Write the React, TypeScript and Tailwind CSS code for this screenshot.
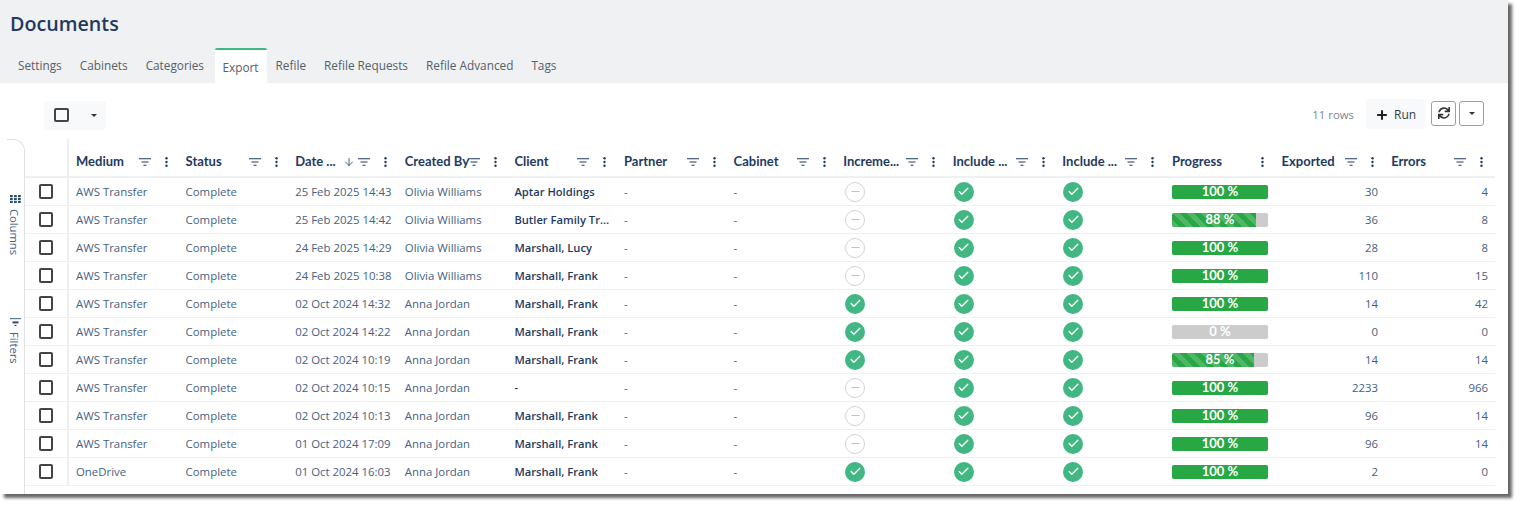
import { Check, Minus, Plus, ArrowDown } from "lucide-react";
import { FaSync } from "react-icons/fa";

const body = "font-['Open_Sans','Liberation_Sans',sans-serif]";
const head = "font-['Lato','Liberation_Sans',sans-serif]";

const tabs = ["Settings", "Cabinets", "Categories", "Export", "Refile", "Refile Requests", "Refile Advanced", "Tags"];

const columns = [
  "Medium", "Status", "Date ...", "Created By", "Client", "Partner", "Cabinet",
  "Increme...", "Include ...", "Include ...", "Progress", "Exported", "Errors",
];

const rows = [
  { medium: "AWS Transfer", date: "25 Feb 2025 14:43", by: "Olivia Williams", client: "Aptar Holdings", inc: false, pct: 100, exported: 30, errors: 4 },
  { medium: "AWS Transfer", date: "25 Feb 2025 14:42", by: "Olivia Williams", client: "Butler Family Trust", inc: false, pct: 88, exported: 36, errors: 8 },
  { medium: "AWS Transfer", date: "24 Feb 2025 14:29", by: "Olivia Williams", client: "Marshall, Lucy", inc: false, pct: 100, exported: 28, errors: 8 },
  { medium: "AWS Transfer", date: "24 Feb 2025 10:38", by: "Olivia Williams", client: "Marshall, Frank", inc: false, pct: 100, exported: 110, errors: 15 },
  { medium: "AWS Transfer", date: "02 Oct 2024 14:32", by: "Anna Jordan", client: "Marshall, Frank", inc: true, pct: 100, exported: 14, errors: 42 },
  { medium: "AWS Transfer", date: "02 Oct 2024 14:22", by: "Anna Jordan", client: "Marshall, Frank", inc: true, pct: 0, exported: 0, errors: 0 },
  { medium: "AWS Transfer", date: "02 Oct 2024 10:19", by: "Anna Jordan", client: "Marshall, Frank", inc: true, pct: 85, exported: 14, errors: 14 },
  { medium: "AWS Transfer", date: "02 Oct 2024 10:15", by: "Anna Jordan", client: "-", inc: false, pct: 100, exported: 2233, errors: 966 },
  { medium: "AWS Transfer", date: "02 Oct 2024 10:13", by: "Anna Jordan", client: "Marshall, Frank", inc: false, pct: 100, exported: 96, errors: 14 },
  { medium: "AWS Transfer", date: "01 Oct 2024 17:09", by: "Anna Jordan", client: "Marshall, Frank", inc: false, pct: 100, exported: 96, errors: 14 },
  { medium: "OneDrive", date: "01 Oct 2024 16:03", by: "Anna Jordan", client: "Marshall, Frank", inc: true, pct: 100, exported: 2, errors: 0 },
];

const gridCols = "grid grid-cols-[44px_repeat(12,109.6px)_111px]";

function Caret() {
  return <span className="w-0 h-0 border-x-[3.5px] border-x-transparent border-t-[3.5px] border-t-[#333]" />;
}

function Box() {
  return <span className="block w-[14.5px] h-[14.5px] rounded-[2px] border-2 border-[#444]" />;
}

function FilterIcon() {
  return (
    <svg width="12" height="8" viewBox="0 0 12 8" className="shrink-0">
      <path d="M0 .75h12M2.5 4h7M4.5 7.25h3" stroke="#1f3a5f" strokeWidth="1.2" fill="none" />
    </svg>
  );
}

function DotsIcon() {
  return (
    <svg width="3" height="10" viewBox="0 0 3 10" className="shrink-0">
      <circle cx="1.5" cy="1.2" r="1.2" fill="#1f3a5f" />
      <circle cx="1.5" cy="5" r="1.2" fill="#1f3a5f" />
      <circle cx="1.5" cy="8.8" r="1.2" fill="#1f3a5f" />
    </svg>
  );
}

function GridIcon() {
  return (
    <svg width="11" height="8" viewBox="0 0 11 8">
      {[0, 4, 8].map((x) =>
        [0, 3, 6].map((y) => <rect key={`${x}-${y}`} x={x} y={y} width="2.8" height="2.2" fill="#2f4f73" />)
      )}
    </svg>
  );
}

function FiltersIcon() {
  return (
    <svg width="11" height="8" viewBox="0 0 11 8">
      <rect x="0" y="0" width="11" height="1.2" fill="#5f7a96" />
      <rect x="2.5" y="3.4" width="6" height="2" fill="#2f4f73" />
      <rect x="4.5" y="6.8" width="2" height="1.2" fill="#2f4f73" />
    </svg>
  );
}

function YesIcon() {
  return (
    <span className="flex items-center justify-center w-5 h-5 rounded-full bg-[#41b883]">
      <Check size={13} strokeWidth={2.5} className="text-white" />
    </span>
  );
}

function NoIcon() {
  return (
    <span className="flex items-center justify-center w-5 h-5 rounded-full border-[1.5px] border-[#d4d4d4] bg-white">
      <Minus size={13} strokeWidth={1.5} className="text-[#b9b3b3]" />
    </span>
  );
}

function Progress({ pct }: { pct: number }) {
  return (
    <div className={`relative w-[96px] h-[14px] rounded-[2px] bg-[#cccccc] overflow-hidden ${head}`}>
      {pct === 100 && <div className="absolute inset-0 bg-[#28a745]" />}
      {pct > 0 && pct < 100 && (
        <div
          className="absolute inset-y-0 left-0 bg-[#28a745] bg-[repeating-linear-gradient(45deg,rgba(255,255,255,0.18)_0,rgba(255,255,255,0.18)_5px,transparent_5px,transparent_10px)]"
          style={{ width: `${pct}%` }}
        />
      )}
      <div className="absolute inset-0 flex items-center justify-center text-white text-[13px] font-bold leading-none">
        {pct} %
      </div>
    </div>
  );
}

function Cell({ children, className = "" }: { children: React.ReactNode; className?: string }) {
  return <div className={`flex items-center min-w-0 pl-[7px] ${className}`}>{children}</div>;
}

export default function App() {
  return (
    <div className="w-[1523px] h-[509px] bg-white overflow-hidden">
      <div className={`w-[1508px] h-[494px] bg-white shadow-[4px_4px_3px_rgba(0,0,0,0.6)] text-[#46617f] ${body}`}>
        <header className="h-[83px] bg-[#f0f1f3] flex flex-col justify-between">
          <h1 className="pl-[10px] pt-[10px] text-[19.7px] leading-[28px] font-semibold text-[#1f3a5f]">Documents</h1>
          <nav className="flex pl-[9px] h-[35px] text-[11.8px] text-[#55606b]">
            {tabs.map((tab) =>
              tab === "Export" ? (
                <div key={tab} className="flex items-center ml-[1.5px] pt-[3px] px-[8px] bg-white border-t-2 border-[#41b883] rounded-t-[2px]">
                  {tab}
                </div>
              ) : (
                <div key={tab} className="flex items-center px-[9px]">{tab}</div>
              )
            )}
          </nav>
        </header>

        <div className="flex items-center justify-between pl-[44px] pr-[24px] pt-[8px] h-[56px]">
          <div className="flex items-center gap-[22px] w-[62px] h-[29px] pl-[10px] rounded-[3px] bg-[#f8f9fa]">
            <Box />
            <Caret />
          </div>
          <div className="flex items-center text-[12px]">
            <span className="text-[#7d858d] text-[11.4px] mr-[12px]">11 rows</span>
            <div className="flex items-center gap-[5px] w-[59px] h-[30px] mb-[2px] pl-[9px] pt-[2px] rounded-[3px] bg-[#f8f9fa] text-[#333d47]">
              <Plus size={14} strokeWidth={3.5} className="text-[#222]" />
              Run
            </div>
            <div className="flex items-center justify-center w-[25px] h-[25px] mb-[4px] ml-[6px] rounded-[3px] border border-[#9a9fa4]">
              <FaSync size={12} className="text-[#333]" />
            </div>
            <div className="flex items-center justify-center w-[25px] h-[25px] mb-[4px] ml-[3px] rounded-[3px] border border-[#9a9fa4]">
              <Caret />
            </div>
          </div>
        </div>

        <div className="flex pl-[7px]">
          <aside className="relative w-[18px] h-[355px] shrink-0 rounded-tr-[12px] border-t border-r border-[#dfe1e4]">
            <div className="absolute left-[0px] top-[55px] flex flex-col items-center gap-[6px]">
              <GridIcon />
              <span className="[writing-mode:vertical-rl] mr-[2px] text-[11.2px] leading-[14px]">Columns</span>
            </div>
            <div className="absolute left-[0px] top-[178px] flex flex-col items-center gap-[6px]">
              <FiltersIcon />
              <span className="[writing-mode:vertical-rl] mr-[2px] text-[11.2px] leading-[14px]">Filters</span>
            </div>
          </aside>

          <div className="flex flex-col">
            <div className={`${gridCols} h-[39px] border-b-2 border-[#eef0f2]`}>
              <div className="border-r-2 border-[#eef0f2]" />
              {columns.map((col, i) => (
                <div key={i} className={`relative flex items-center pt-[9px] pl-[7px] text-[13px] font-bold text-[#1f3a5f] ${head}`}>
                  <span className="whitespace-nowrap">{col}</span>
                  {col === "Date ..." && (
                    <ArrowDown size={12} strokeWidth={1.6} className="absolute left-[55px] top-[17px] text-[#1f3a5f]" />
                  )}
                  {col !== "Progress" && (
                    <span className="absolute left-[70px] top-[19px] flex"><FilterIcon /></span>
                  )}
                  <span className="absolute left-[96px] top-[18px] flex"><DotsIcon /></span>
                </div>
              ))}
            </div>
            {rows.map((row) => (
              <div key={row.date} className={`${gridCols} h-[28px] border-b border-[#eef0f2] text-[11.4px] leading-[16px]`}>
                <div className="flex items-center justify-center border-r-2 border-[#eef0f2]"><Box /></div>
                <Cell>{row.medium}</Cell>
                <Cell>Complete</Cell>
                <Cell><span className="whitespace-nowrap">{row.date}</span></Cell>
                <Cell>{row.by}</Cell>
                <Cell className="pr-[4px]"><span className="truncate pt-[1px] text-[11.2px] font-semibold text-[#1f3a5f]">{row.client}</span></Cell>
                <Cell>-</Cell>
                <Cell>-</Cell>
                <Cell className="pl-[9px]">{row.inc ? <YesIcon /> : <NoIcon />}</Cell>
                <Cell className="pl-[8px]"><YesIcon /></Cell>
                <Cell className="pl-[8px]"><YesIcon /></Cell>
                <Cell><Progress pct={row.pct} /></Cell>
                <Cell className="justify-end pr-[6px]">{row.exported}</Cell>
                <Cell className="justify-end pr-[7px]">{row.errors}</Cell>
              </div>
            ))}
          </div>
        </div>
      </div>
    </div>
  );
}
